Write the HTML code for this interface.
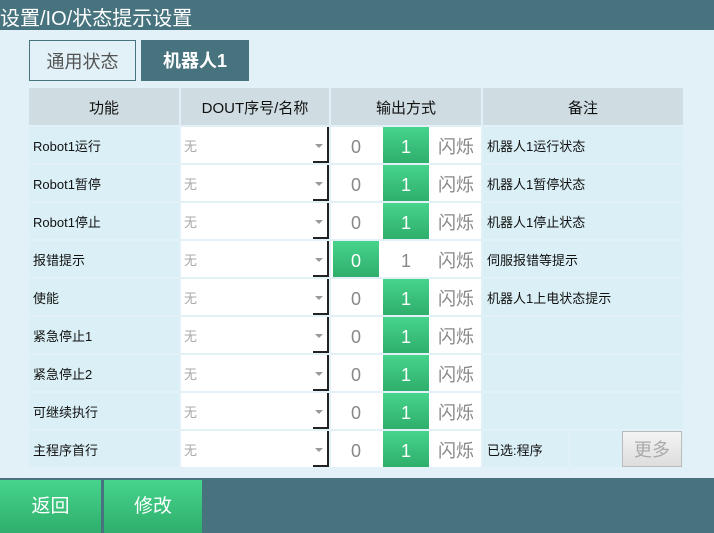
<!DOCTYPE html><html><head><meta charset="utf-8"><style>
*{margin:0;padding:0;box-sizing:border-box}
body{width:714px;height:533px;overflow:hidden;background:#e1f1f7;font-family:"Liberation Sans","Noto Sans CJK SC",sans-serif;position:relative}
.a{position:absolute}
.top{left:0;top:0;width:714px;height:30px;background:#47737f;color:#fff;font-size:20px;line-height:38px;padding-left:0;overflow:hidden}
.tab{top:40px;height:41px;font-size:18px;line-height:42px;text-align:center}
.h{top:88px;height:37px;background:#cfdde2;font-size:15px;line-height:41px;text-align:center;color:#111}
.r{left:0;width:714px;height:36px}
.r>div{position:absolute;top:0;height:36px;line-height:40px}
.f{left:29px;width:150px;background:#daf0f6;font-size:13px;padding-left:4px;color:#111}
.d{left:181px;width:148px;background:#fff;color:#aaa;font-size:13px;padding-left:3px;border-right:2px solid #222}
.d i{position:absolute;right:4px;top:17px;border:4px solid transparent;border-top:4px solid #999;border-bottom:0}
.d b{position:absolute;right:-2px;bottom:0;width:16px;height:2px;background:#222}
.o{left:331px;width:150px;background:#fff;font-size:18px;color:#888}
.o span{position:absolute;top:0;height:36px;text-align:center}
.g{background:linear-gradient(#46d48c,#2fae6c);color:#fff}
.m{left:483px;width:200px;background:#daf0f6;font-size:13px;padding-left:4px;color:#111}
.btn{top:480px;height:53px;background:linear-gradient(#46d48c,#2fae6c);color:#fff;font-size:19px;line-height:53px;text-align:center}
</style></head><body>
<div class="a top">设置/IO/状态提示设置</div>
<div class="a tab" style="left:29px;width:107px;border:1px solid #47737f;color:#555">通用状态</div>
<div class="a tab" style="left:141px;width:108px;background:#47737f;color:#fff;font-weight:bold">机器人1</div>
<div class="a h" style="left:29px;width:150px">功能</div>
<div class="a h" style="left:181px;width:148px">DOUT序号/名称</div>
<div class="a h" style="left:331px;width:150px">输出方式</div>
<div class="a h" style="left:483px;width:200px">备注</div>

<div class="a r" style="top:127px"><div class="f">Robot1运行</div><div class="d">无<i></i><b></b></div><div class="o"><span style="left:0;width:50px">0</span><span class="g" style="left:52px;width:46px">1</span><span style="left:100px;width:50px">闪烁</span></div><div class="m">机器人1运行状态</div></div>
<div class="a r" style="top:165px"><div class="f">Robot1暂停</div><div class="d">无<i></i><b></b></div><div class="o"><span style="left:0;width:50px">0</span><span class="g" style="left:52px;width:46px">1</span><span style="left:100px;width:50px">闪烁</span></div><div class="m">机器人1暂停状态</div></div>
<div class="a r" style="top:203px"><div class="f">Robot1停止</div><div class="d">无<i></i><b></b></div><div class="o"><span style="left:0;width:50px">0</span><span class="g" style="left:52px;width:46px">1</span><span style="left:100px;width:50px">闪烁</span></div><div class="m">机器人1停止状态</div></div>
<div class="a r" style="top:241px"><div class="f">报错提示</div><div class="d">无<i></i><b></b></div><div class="o"><span class="g" style="left:2px;width:46px">0</span><span style="left:50px;width:50px">1</span><span style="left:100px;width:50px">闪烁</span></div><div class="m">伺服报错等提示</div></div>
<div class="a r" style="top:279px"><div class="f">使能</div><div class="d">无<i></i><b></b></div><div class="o"><span style="left:0;width:50px">0</span><span class="g" style="left:52px;width:46px">1</span><span style="left:100px;width:50px">闪烁</span></div><div class="m">机器人1上电状态提示</div></div>
<div class="a r" style="top:317px"><div class="f">紧急停止1</div><div class="d">无<i></i><b></b></div><div class="o"><span style="left:0;width:50px">0</span><span class="g" style="left:52px;width:46px">1</span><span style="left:100px;width:50px">闪烁</span></div><div class="m"></div></div>
<div class="a r" style="top:355px"><div class="f">紧急停止2</div><div class="d">无<i></i><b></b></div><div class="o"><span style="left:0;width:50px">0</span><span class="g" style="left:52px;width:46px">1</span><span style="left:100px;width:50px">闪烁</span></div><div class="m"></div></div>
<div class="a r" style="top:393px"><div class="f">可继续执行</div><div class="d">无<i></i><b></b></div><div class="o"><span style="left:0;width:50px">0</span><span class="g" style="left:52px;width:46px">1</span><span style="left:100px;width:50px">闪烁</span></div><div class="m"></div></div>
<div class="a r" style="top:431px"><div class="f">主程序首行</div><div class="d">无<i></i><b></b></div><div class="o"><span style="left:0;width:50px">0</span><span class="g" style="left:52px;width:46px">1</span><span style="left:100px;width:50px">闪烁</span></div><div class="m" style="width:85px">已选:程序</div><div class="m" style="left:570px;width:113px"><span style="position:absolute;left:52px;top:0;width:60px;height:36px;background:linear-gradient(#f4f4f4,#ddd);border:1px solid #bbb;color:#aaa;font-size:18px;text-align:center;line-height:36px">更多</span></div></div>

<div class="a" style="left:0;top:478px;width:714px;height:55px;background:#47737f"></div>
<div class="a btn" style="left:0;width:101px">返回</div>
<div class="a btn" style="left:104px;width:98px">修改</div>
</body></html>
